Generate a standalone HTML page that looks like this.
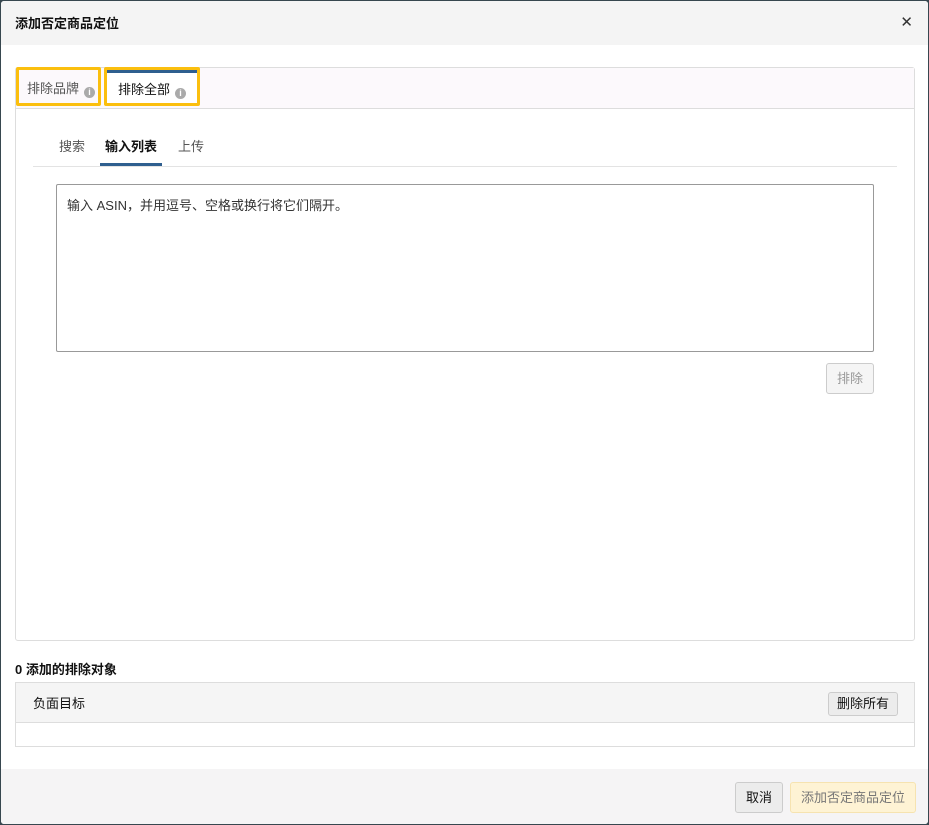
<!DOCTYPE html>
<html><head><meta charset="utf-8"><style>
*{box-sizing:border-box;margin:0;padding:0}
body{width:929px;height:825px;background:#37474f;font-family:"Liberation Sans","Noto Sans CJK SC",sans-serif;font-size:13px;color:#111;position:relative;overflow:hidden}
.m{position:absolute;left:1px;top:1px;width:927px;height:823px;background:#fff;border-radius:3px;overflow:hidden}
.hd{position:absolute;left:0;top:0;width:927px;height:44px;background:#f4f4f4;}
.hd .t{position:absolute;left:14px;top:12px;font-size:13px;font-weight:bold}
.hd .x{position:absolute;right:15px;top:12px;font-size:15px;color:#333}
.box{position:absolute;left:14px;top:66px;width:900px;height:574px;border:1px solid #ddd;border-radius:3px}
.tabbar{position:absolute;left:0;top:0;width:898px;height:41px;background:#fcf9fc;border-bottom:1px solid #ddd}
.tab{position:absolute;border:3px solid #fbbf0e;border-radius:2px;font-size:13px}
.i{display:inline-block;width:11px;height:11px;border-radius:50%;background:#aaa;color:#fff;font-size:9px;line-height:11px;text-align:center;font-weight:bold;vertical-align:-2px;margin-left:5px}
.sub{position:absolute;left:42px;top:68px;font-size:13px}
.line{position:absolute;left:17px;top:98px;width:864px;height:1px;background:#e3e3e3}
.ta{position:absolute;left:40px;top:116px;width:818px;height:168px;border:1px solid #999;border-radius:2px;padding:10px 10px;color:#333}
.btn{position:absolute;background:#ececec;border:1px solid #ccc;border-radius:3px;text-align:center}
</style></head><body><div class="m">
<div class="hd"><span class="t">添加否定商品定位</span><span class="x">✕</span></div>
<div class="box">
<div class="tabbar"></div>
<div class="tab" style="left:0;top:-1px;width:85px;height:39px;padding:8px 0 0 8px;color:#555">排除品牌<span class="i">i</span></div>
<div class="tab" style="left:88px;top:-1px;width:96px;height:39px;padding:9px 0 0 11px;background:#fff;box-shadow:inset 0 3px 0 #2f5f8f">排除全部<span class="i">i</span></div>
<span class="sub" style="left:43px;color:#555">搜索</span>
<span class="sub" style="left:89px;font-weight:bold">输入列表</span>
<span class="sub" style="left:162px;color:#555">上传</span>
<div style="position:absolute;left:84px;top:95px;width:62px;height:3px;background:#2f5f8f"></div>
<div class="line"></div>
<div class="ta">输入 ASIN，并用逗号、空格或换行将它们隔开。</div>
<div class="btn" style="left:810px;top:295px;width:48px;height:31px;line-height:29px;color:#999;background:#f5f5f5">排除</div>
</div>
<div style="position:absolute;left:14px;top:658px;font-weight:bold;font-size:13px">0 添加的排除对象</div>
<div style="position:absolute;left:14px;top:681px;width:900px;height:65px;border:1px solid #ddd">
<div style="height:40px;background:#f5f5f5;border-bottom:1px solid #ddd;padding:10px 0 0 17px">负面目标</div>
<div class="btn" style="left:812px;top:9px;width:70px;height:24px;line-height:22px">删除所有</div>
</div>
<div style="position:absolute;left:0;top:768px;width:927px;height:55px;background:#f5f4f5"></div>
<div class="btn" style="left:734px;top:781px;width:48px;height:31px;line-height:29px">取消</div>
<div class="btn" style="left:789px;top:781px;width:126px;height:31px;line-height:29px;background:#fef3d4;border-color:#f6e3b0;color:#777">添加否定商品定位</div>
</div></body></html>
